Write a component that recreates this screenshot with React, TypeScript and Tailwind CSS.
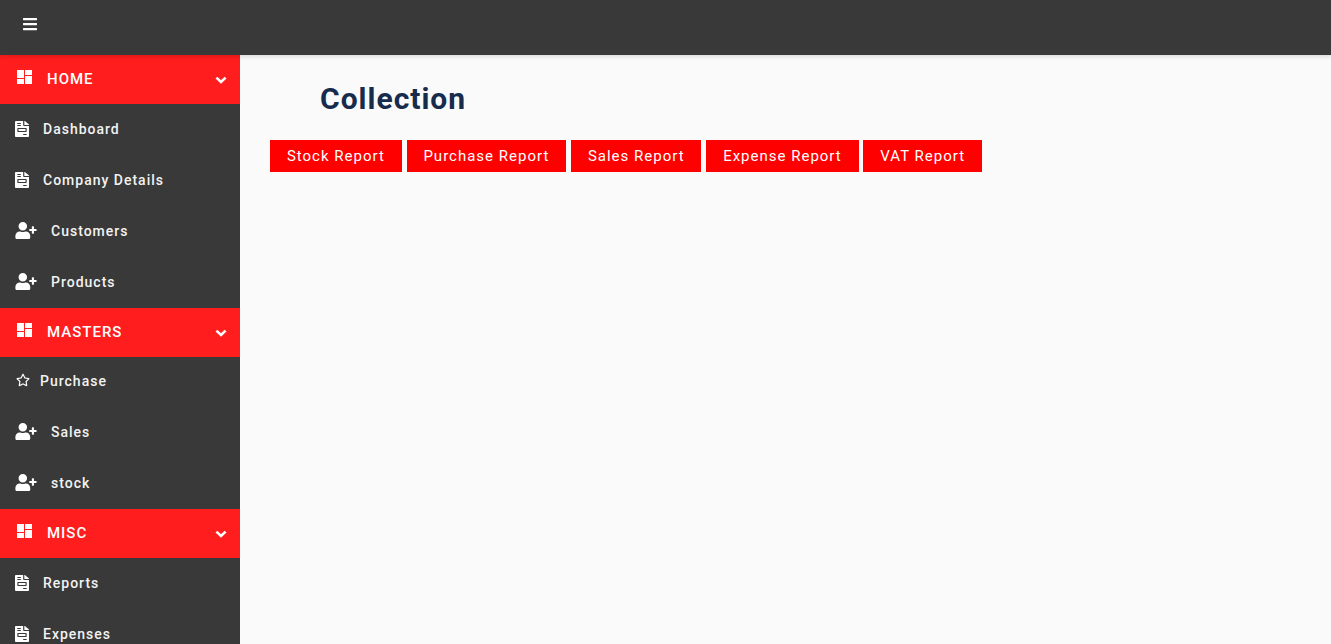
import React from "react";
import { FaBars, FaFileInvoice, FaRegStar, FaUserPlus } from "react-icons/fa";

type ItemKind = "file" | "user" | "star";

interface IItem {
  name: string;
  kind: ItemKind;
}

interface ISection {
  name: string;
  items: IItem[];
}

const sections: ISection[] = [
  {
    name: "HOME",
    items: [
      { name: "Dashboard", kind: "file" },
      { name: "Company Details", kind: "file" },
      { name: "Customers", kind: "user" },
      { name: "Products", kind: "user" },
    ],
  },
  {
    name: "MASTERS",
    items: [
      { name: "Purchase", kind: "star" },
      { name: "Sales", kind: "user" },
      { name: "stock", kind: "user" },
    ],
  },
  {
    name: "MISC",
    items: [
      { name: "Reports", kind: "file" },
      { name: "Expenses", kind: "file" },
    ],
  },
];

const reports = ["Stock Report", "Purchase Report", "Sales Report", "Expense Report", "VAT Report"];

const QuiltIcon: React.FC = () => (
  <svg width="15" height="14" viewBox="0 0 15 14" fill="white" className="block shrink-0">
    <rect x="0" y="0" width="7" height="8" />
    <rect x="8" y="0" width="7" height="5" />
    <rect x="0" y="9" width="7" height="5" />
    <rect x="8" y="6" width="7" height="8" />
  </svg>
);

const ChevronIcon: React.FC = () => (
  <svg width="12" height="8" viewBox="0 0 12 8" fill="none" className="mt-[1px] block shrink-0">
    <path d="M1.4 1.6 6 6 10.6 1.6" stroke="white" strokeWidth="2.6" />
  </svg>
);

const SideItem: React.FC<{ item: IItem }> = ({ item }) => {
  if (item.kind === "file") {
    return (
      <a className="flex h-[51px] items-center pb-[1px] pl-[15px] text-[14px] font-medium tracking-[1px] text-[#f2f2f2]">
        <FaFileInvoice preserveAspectRatio="none" className="mr-[14px] mb-[1px] h-[16px] w-[14px] shrink-0 text-white" />
        {item.name}
      </a>
    );
  }
  if (item.kind === "user") {
    return (
      <a className="flex h-[51px] items-center pl-[15px] text-[14px] font-medium tracking-[1px] text-[#f2f2f2]">
        <FaUserPlus className="mr-[14px] mb-[2px] h-[17px] w-[22px] shrink-0 text-white" />
        {item.name}
      </a>
    );
  }
  return (
    <a className="flex h-[50px] items-center pb-[2px] pl-[16px] text-[14px] font-medium tracking-[1px] text-[#f2f2f2]">
      <FaRegStar className="mr-[10px] mb-[2px] h-[14px] w-[14px] shrink-0 text-white" />
      {item.name}
    </a>
  );
};

export default function App() {
  return (
    <div className="flex h-screen flex-col overflow-hidden bg-[#fafafa] font-['Roboto',sans-serif]">
      <header className="relative z-10 flex h-[55px] shrink-0 items-center bg-[#393939] pb-[7px] pl-[22px] shadow-[0_2px_4px_rgba(0,0,0,0.12)]">
        <FaBars className="h-[16px] w-[16px] text-white" />
      </header>
      <div className="flex min-h-0 flex-1">
        <aside className="w-[240px] shrink-0 overflow-hidden bg-[#393939]">
          {sections.map((section) => (
            <div key={section.name}>
              <div className="flex h-[49px] items-center bg-[#ff1d1d] pl-[17px] pr-[13px] text-[15px] font-medium tracking-[1px] text-white">
                <span className="mb-[5px]">
                  <QuiltIcon />
                </span>
                <span className="ml-[15px] flex-1">{section.name}</span>
                <ChevronIcon />
              </div>
              {section.items.map((item) => (
                <SideItem key={item.name} item={item} />
              ))}
            </div>
          ))}
        </aside>
        <main className="flex-1 pl-[30px]">
          <h1 className="mt-[25px] ml-[50px] text-[30px] leading-[38px] font-bold tracking-[1px] text-[#172b4d]">Collection</h1>
          <div className="mt-[22px] flex gap-[4.8px]">
            {reports.map((report) => (
              <button
                key={report}
                className="h-[32px] bg-[#ff0000] px-[16.9px] text-[15px] tracking-[1px] text-white"
              >
                {report}
              </button>
            ))}
          </div>
        </main>
      </div>
    </div>
  );
}
